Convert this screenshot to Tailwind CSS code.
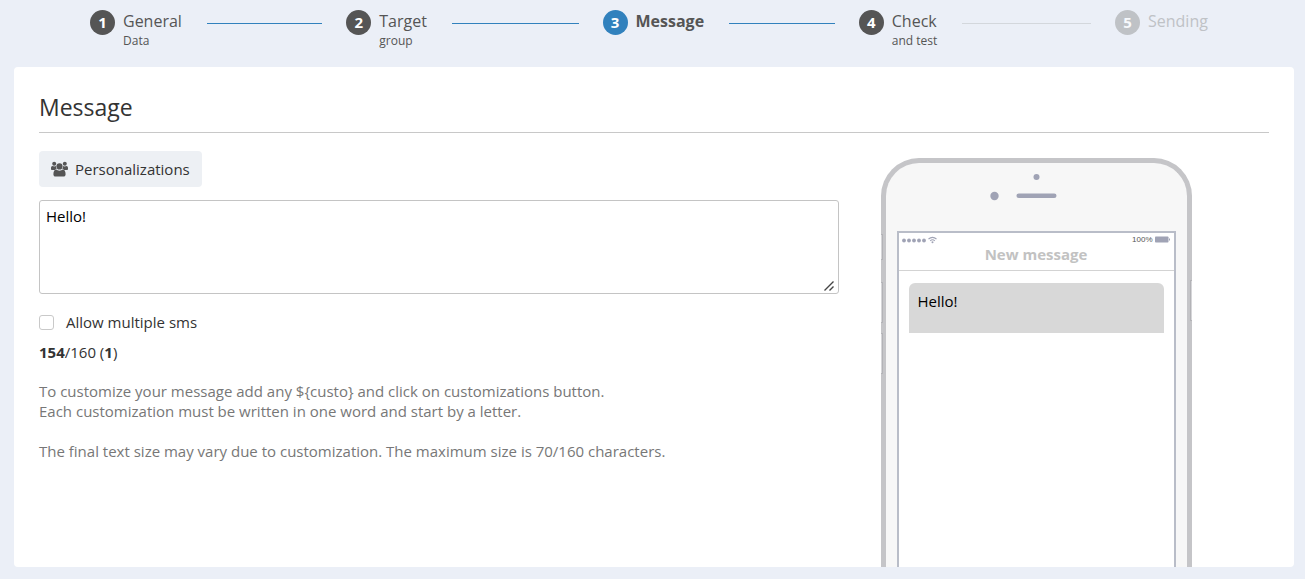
<!DOCTYPE html>
<html lang="en">
<head>
<meta charset="utf-8">
<meta name="viewport" content="width=device-width, initial-scale=1">
<title>Message</title>
<script src="https://cdn.jsdelivr.net/npm/@tailwindcss/browser@4"></script>
</head>
<body class="flex min-h-screen flex-col bg-[#ebeff7] pr-[11px] pb-3 pl-[14px] font-['Open_Sans',sans-serif] text-[15px] leading-5 text-[#333]">
  <nav aria-label="Steps" class="h-[67px] pt-[10px] pl-[76px]">
    <ol class="flex text-[#555]">
      <li class="flex flex-1 items-start">
        <span class="h-[25px] w-[25px] rounded-full bg-[#555] text-center leading-6 font-bold text-white">1</span>
        <a href="#" class="ml-2 block"><span class="block text-base leading-[22px]">General</span><span class="block text-xs leading-[18px]">Data</span></a>
        <span class="mt-[13px] mr-6 ml-[25px] h-px flex-1 bg-[#3181bd]"></span>
      </li>
      <li class="flex flex-1 items-start">
        <span class="h-[25px] w-[25px] rounded-full bg-[#555] text-center leading-6 font-bold text-white">2</span>
        <a href="#" class="ml-2 block"><span class="block text-base leading-[22px]">Target</span><span class="block text-xs leading-[18px]">group</span></a>
        <span class="mt-[13px] mr-6 ml-[25px] h-px flex-1 bg-[#3181bd]"></span>
      </li>
      <li class="flex flex-1 items-start" aria-current="step">
        <span class="h-[25px] w-[25px] rounded-full bg-[#3181bd] text-center leading-6 font-bold text-white">3</span>
        <a href="#" class="ml-2 block text-base leading-[22px] font-bold">Message</a>
        <span class="mt-[13px] mr-6 ml-[25px] h-px flex-1 bg-[#3181bd]"></span>
      </li>
      <li class="flex flex-1 items-start">
        <span class="h-[25px] w-[25px] rounded-full bg-[#555] text-center leading-6 font-bold text-white">4</span>
        <a href="#" class="ml-2 block"><span class="block text-base leading-[22px]">Check</span><span class="block text-xs leading-[18px]">and test</span></a>
        <span class="mt-[13px] mr-6 ml-[25px] h-px flex-1 bg-[#d3d7dc]"></span>
      </li>
      <li class="flex w-[179px] items-start text-[#bfc2c6]">
        <span class="h-[25px] w-[25px] rounded-full bg-[#bfc2c6] text-center leading-6 font-bold text-[#f7f9fc]">5</span>
        <span class="ml-2 text-base leading-[22px]">Sending</span>
      </li>
    </ol>
  </nav>

  <main class="flex flex-1 flex-col rounded bg-white px-[25px] pt-6">
    <h1 class="border-b border-[#c8c8c8] pb-[9px] text-[23px] leading-8">Message</h1>
    <div class="flex flex-1">
      <section class="w-[65%] pt-[18px]">
        <button type="button" class="flex h-9 items-center gap-[7px] rounded bg-[#edf0f4] px-3">
          <svg class="h-4 w-[17px] fill-[#555]" viewBox="0 0 17 16" aria-hidden="true">
            <circle cx="3.2" cy="2.7" r="2"/><circle cx="13.8" cy="2.7" r="2"/>
            <path d="M1.6 5C.6 5 0 5.800 0 7v1c0 .7.500 1 1.200 1H3.800C4.300 8.300 5 8 5.700 7.900 5 7 4.800 6 4.900 5.100 3.700 5.600 2.600 5.500 1.600 5z"/>
            <path d="M15.400 5c1 0 1.600.8 1.600 2v1c0 .7-.5 1-1.200 1h-2.600c-.5-.7-1.200-1-1.900-1.100.7-.9.900-1.900.8-2.800 1.200.5 2.300.4 3.300-.1z"/>
            <circle cx="8.500" cy="5.400" r="3.100"/>
            <path d="M5.300 8.500C3.500 8.500 2.400 10.500 2.400 13.200c0 1.400.9 2.300 2.200 2.300h7.800c1.300 0 2.200-.9 2.200-2.300 0-2.700-1.100-4.700-2.900-4.700-.8.700-1.900 1.200-3.200 1.200S6.100 9.200 5.300 8.500z"/>
          </svg>
          Personalizations
        </button>
        <div class="relative mt-[13px]">
          <textarea aria-label="Message text" class="block h-[94px] w-full resize-none rounded-[3px] border border-[#c4c4c4] bg-white px-1.5 py-[5px] text-black">Hello!</textarea>
          <svg class="pointer-events-none absolute right-1 bottom-0.5 size-3 stroke-[#444]" viewBox="0 0 12 12" aria-hidden="true"><path d="M1.500 10.500 10.500 1.500M6.500 10.500 10.500 6.500" stroke-width="1.400"/></svg>
        </div>
        <label class="mt-[18px] flex w-fit items-center gap-3">
          <input type="checkbox" class="size-[15px] appearance-none rounded-[3px] border border-[#c9c9c9] bg-white checked:bg-[#3181bd]">
          Allow multiple sms
        </label>
        <p class="mt-[10px]"><b>154</b>/160 (<b>1</b>)</p>
        <p class="mt-[19px] text-[#777]">To customize your message add any ${custo} and click on customizations button.<br>Each customization must be written in one word and start by a letter.</p>
        <p class="mt-5 text-[#777]">The final text size may vary due to customization. The maximum size is 70/160 characters.</p>
      </section>

      <aside aria-label="Preview" class="relative mt-[25px] ml-[42px] flex w-[311px] flex-col rounded-t-[38px] border-x-[5px] border-t-[5px] border-[#c5c5c8] bg-[#f7f7f7] px-[11px]">
        <span class="absolute top-[71px] -left-[5px] h-[26px] w-0.5 border-y border-r border-[#b3b3b7] bg-[#d6d6d9]"></span>
        <span class="absolute top-[119px] -left-[5px] h-[41px] w-0.5 border-y border-r border-[#b3b3b7] bg-[#d6d6d9]"></span>
        <span class="absolute top-[170px] -left-[5px] h-[41px] w-0.5 border-y border-r border-[#b3b3b7] bg-[#d6d6d9]"></span>
        <span class="absolute top-[117px] -right-[5px] h-[41px] w-0.5 border-y border-l border-[#b3b3b7] bg-[#d6d6d9]"></span>
        <svg class="mx-auto h-[68px] w-[100px] shrink-0 fill-[#a0a3b5]" viewBox="0 0 100 68" aria-hidden="true">
          <circle cx="50.500" cy="14" r="3"/><circle cx="8.500" cy="33" r="4.200"/><rect x="30.500" y="30.500" width="40" height="4.500" rx="2.250"/>
        </svg>
        <div class="flex flex-1 flex-col border-x-2 border-t-2 border-[#b9bdc8] bg-white">
          <div class="flex h-[11px] items-center pt-0.5 pr-1 pl-[3px] text-[7px] leading-3 text-[#555]">
            <svg class="h-2 w-9 fill-[#a0a3b5]" viewBox="0 0 36 8" aria-hidden="true">
              <circle cx="2" cy="4.500" r="1.900"/><circle cx="7" cy="4.500" r="1.900"/><circle cx="12" cy="4.500" r="1.900"/><circle cx="17" cy="4.500" r="1.900"/><circle cx="22" cy="4.500" r="1.900"/>
              <path d="M26.500 3Q30.500-.3 34.500 3M28.200 4.800Q30.500 2.800 32.800 4.800" fill="none" stroke="#a0a3b5" stroke-width="1.100"/><circle cx="30.500" cy="6.300" r="1"/>
            </svg>
            <span class="ml-auto font-['Liberation_Sans',sans-serif] text-[8px]">100%</span>
            <svg class="ml-0.5 h-[7px] w-[15px] fill-[#a0a3b5]" viewBox="0 0 15 7" aria-hidden="true"><rect y=".5" width="13.500" height="6" rx=".8"/><rect x="14" y="2.500" width="1" height="2"/></svg>
          </div>
          <h2 class="border-b border-[#d3d3d3] pb-1.5 text-center font-bold text-[#c2c2c2]">New message</h2>
          <p class="mx-[10px] mt-3 h-[50px] rounded-t-md bg-[#d8d8d8] px-[9px] pt-2 text-black">Hello!</p>
        </div>
      </aside>
    </div>
  </main>
</body>
</html>
